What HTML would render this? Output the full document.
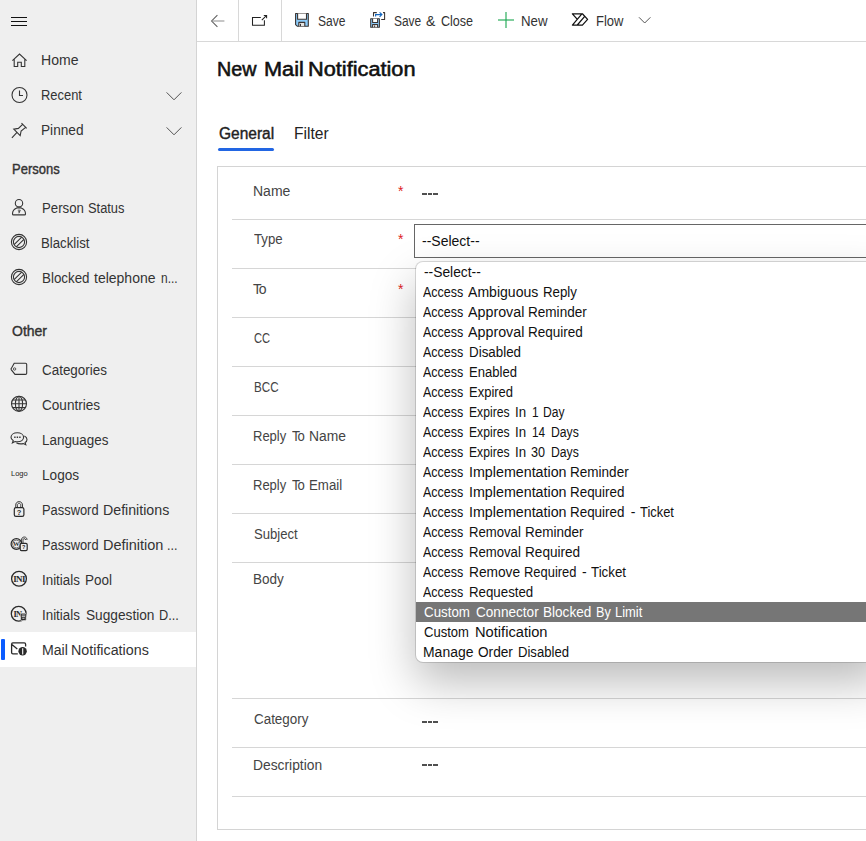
<!DOCTYPE html>
<html>
<head>
<meta charset="utf-8">
<title>New Mail Notification</title>
<style>
*{box-sizing:border-box;margin:0;padding:0}
html,body{width:866px;height:841px;overflow:hidden;background:#fff}
body{font-family:"Liberation Sans",sans-serif;font-size:14px;color:#333;position:relative}
.abs{position:absolute}
#side{position:absolute;left:0;top:0;width:196px;height:841px;background:#efefef}
#sideborder{position:absolute;left:196px;top:0;width:1px;height:841px;background:#d4d4d4}
.nav{position:absolute;left:0;width:196px;height:35px}
.nav .t{position:absolute;left:42px;top:0;line-height:35px;font-size:14px;color:#333;white-space:nowrap}
.nav svg{position:absolute;left:0;top:0;width:40px;height:35px;overflow:visible;fill:none;stroke:#343434;stroke-width:1.1}
.nav.sel{background:#fff}
.nav.sel .t{top:1px}
.nav.sel:before{content:"";position:absolute;left:1px;top:7px;width:4px;height:21px;background:#0b5cff;border-radius:1px}
.grp{position:absolute;left:11px;font-size:14px;font-weight:normal;-webkit-text-stroke:.4px #333;color:#333;line-height:20px}
.chev{position:absolute;left:166px;top:13px;width:16px;height:9px}
#bar{position:absolute;left:197px;top:0;width:669px;height:42px;background:#fff;border-bottom:1px solid #d8d8d8}
.vsep{position:absolute;top:0;width:1px;height:41px;background:#d8d8d8}
.cmd{position:absolute;top:1px;line-height:41px;font-size:14px;color:#333;white-space:nowrap}
#title{position:absolute;left:217px;top:55px;font-size:20px;font-weight:normal;-webkit-text-stroke:.55px #111;color:#111;line-height:28px;white-space:nowrap}
.tab{position:absolute;top:123px;font-size:16px;line-height:22px;color:#222;white-space:nowrap}
#tabline{position:absolute;left:218px;top:148px;width:56px;height:3px;border-radius:2px;background:#2266e3}
#sect{position:absolute;left:217px;top:166px;width:700px;height:664px;border:1px solid #d4d4d4;background:#fff}
.sep{position:absolute;left:232px;width:640px;height:1px;background:#d6d6d6}
.lbl{position:absolute;left:253px;font-size:14px;line-height:20px;color:#444;white-space:nowrap}
.req{position:absolute;left:398px;margin-top:-1px;font-size:14px;line-height:20px;color:#d22}
#sel{position:absolute;left:414px;top:224px;width:470px;height:34px;border:1px solid #666;background:#fff}
#sel span{position:absolute;left:7px;top:6px;line-height:20px;font-size:14px;color:#111}
#dd{position:absolute;left:416px;top:262px;width:470px;height:400px;background:#fff;border-radius:7px;box-shadow:0 0 0 1px rgba(0,0,0,.14),0 20px 46px rgba(0,0,0,.27);overflow:hidden}
#dd div{height:20px;line-height:20px;padding-left:7px;position:relative;font-size:14px;color:#111;white-space:nowrap}
#dd div.hi{background:#767676;color:#fff}
#dd div span{position:absolute;top:0;display:block}
[id^=x]{transform-origin:0 50%}
#title span,.t span,.lbl span,.cmd span{position:absolute;top:0;display:block}
#x9,#x12b,#x13b{letter-spacing:-1.2px}
</style>
<style id="cal">
#x1{transform:scaleX(0.8594);margin-left:1.00px}
#x3{transform:scaleX(0.9464);margin-left:0.00px}
#x4{transform:scaleX(0.9310);margin-left:0.00px}
#x5{transform:scaleX(0.9684);margin-left:0.70px}
#x6{transform:scaleX(0.9743);margin-left:-1.30px}
#x7{transform:scaleX(1.0000);margin-left:0.00px}
#x8{transform:scaleX(0.9433);margin-left:0.60px}
#x9{transform:scaleX(1.0000);margin-left:0.00px}
#x10{transform:scaleX(0.7955);margin-left:0.60px}
#x11{transform:scaleX(0.8297);margin-left:1.10px}
#x14{transform:scaleX(0.9363);margin-left:0.90px}
#x15{transform:scaleX(0.9645);margin-left:0.00px}
#x16{transform:scaleX(0.9581);margin-left:0.60px}
#x17{transform:scaleX(0.9870);margin-left:0.00px}
#xsel{transform:scaleX(1.0000);margin-left:0.00px}
#x18{transform:scaleX(0.9279);margin-left:0.60px}
#x19{transform:scaleX(1.0002);margin-left:0.60px}
#x20{transform:scaleX(1.0028);margin-left:-1.00px}
#x21{transform:scaleX(0.9227);margin-left:-1.00px}
#x22{transform:scaleX(0.9762);margin-left:-1.00px}
#x24{transform:scaleX(0.9431);margin-left:-1.00px}
#x26{transform:scaleX(0.9588);margin-left:0.00px}
#x27{transform:scaleX(0.9700);margin-left:0.00px}
#x28{transform:scaleX(0.9588);margin-left:0.00px}
#x29{transform:scaleX(0.9730);margin-left:0.00px}
#x23a{transform:scaleX(0.9442);margin-left:-0.40px}
#x23b{transform:scaleX(0.9185);margin-left:0.80px}
#x25a{transform:scaleX(0.9543);margin-left:-0.40px}
#x25b{transform:scaleX(1.0000);margin-left:0.00px}
#x25c{transform:scaleX(0.8526);margin-left:1.00px}
#x30a{transform:scaleX(0.9200);margin-left:0.00px}
#x30b{transform:scaleX(1.0132);margin-left:-0.80px}
#x31a{transform:scaleX(0.9200);margin-left:0.00px}
#x31b{transform:scaleX(1.0347);margin-left:-0.80px}
#x31c{transform:scaleX(0.8900);margin-left:-1.20px}
#x32a{transform:scaleX(0.9539);margin-left:0.00px}
#x32b{transform:scaleX(0.9630);margin-left:-1.40px}
#x33a{transform:scaleX(0.9539);margin-left:0.00px}
#x33b{transform:scaleX(0.9771);margin-left:0.00px}
#x33c{transform:scaleX(0.9100);margin-left:0.00px}
#x34a{transform:scaleX(1.0084);margin-left:0.00px}
#x34b{transform:scaleX(1.0201);margin-left:-1.00px}
#x2a{transform:scaleX(0.8531);margin-left:0.60px}
#x2b{transform:scaleX(1.0000);margin-left:0.00px}
#x2c{transform:scaleX(0.8970);margin-left:0.80px}
#x12a{transform:scaleX(0.9283);margin-left:-1.30px}
#x12b{transform:scaleX(0.9385);margin-left:0.80px}
#x12c{transform:scaleX(0.9897);margin-left:0.40px}
#x13a{transform:scaleX(0.9283);margin-left:-1.30px}
#x13b{transform:scaleX(0.9385);margin-left:0.80px}
#x13c{transform:scaleX(0.9471);margin-left:-0.20px}
#x35a{transform:scaleX(0.9862);margin-left:0.00px}
#x36a{transform:scaleX(0.8913);margin-left:-1.00px}
#x36b{transform:scaleX(1.0041);margin-left:-0.70px}
#x36c{transform:scaleX(0.9486);margin-left:0.00px}
#x37a{transform:scaleX(0.8913);margin-left:-1.00px}
#x37b{transform:scaleX(1.0197);margin-left:-0.70px}
#x37c{transform:scaleX(0.9683);margin-left:0.00px}
#x38a{transform:scaleX(0.8913);margin-left:-1.00px}
#x38b{transform:scaleX(1.0197);margin-left:-0.70px}
#x38c{transform:scaleX(0.9655);margin-left:0.00px}
#x39a{transform:scaleX(0.8913);margin-left:-1.00px}
#x39b{transform:scaleX(0.9554);margin-left:0.00px}
#x40a{transform:scaleX(0.8913);margin-left:-1.00px}
#x40b{transform:scaleX(0.9322);margin-left:0.00px}
#x41a{transform:scaleX(0.8913);margin-left:-1.00px}
#x41b{transform:scaleX(0.9279);margin-left:0.00px}
#x42a{transform:scaleX(0.8913);margin-left:-1.00px}
#x42b{transform:scaleX(0.8698);margin-left:-0.10px}
#x42c{transform:scaleX(0.9497);margin-left:-1.30px}
#x42d{transform:scaleX(0.8500);margin-left:-0.50px}
#x42e{transform:scaleX(0.8656);margin-left:0.00px}
#x43a{transform:scaleX(0.8913);margin-left:-1.00px}
#x43b{transform:scaleX(0.8698);margin-left:-0.10px}
#x43c{transform:scaleX(0.9497);margin-left:-1.30px}
#x43d{transform:scaleX(0.8421);margin-left:-0.40px}
#x43e{transform:scaleX(0.8721);margin-left:-0.40px}
#x44a{transform:scaleX(0.8913);margin-left:-1.00px}
#x44b{transform:scaleX(0.8698);margin-left:-0.10px}
#x44c{transform:scaleX(0.9497);margin-left:-1.30px}
#x44d{transform:scaleX(0.9000);margin-left:0.00px}
#x44e{transform:scaleX(0.8721);margin-left:-0.40px}
#x45a{transform:scaleX(0.8913);margin-left:-1.00px}
#x45b{transform:scaleX(1.0192);margin-left:0.00px}
#x45c{transform:scaleX(0.9667);margin-left:-1.20px}
#x46a{transform:scaleX(0.8913);margin-left:-1.00px}
#x46b{transform:scaleX(1.0192);margin-left:0.00px}
#x46c{transform:scaleX(0.9586);margin-left:-1.20px}
#x47a{transform:scaleX(0.8913);margin-left:-1.00px}
#x47b{transform:scaleX(1.0192);margin-left:0.00px}
#x47c{transform:scaleX(0.9586);margin-left:-1.20px}
#x47d{transform:scaleX(1.0000);margin-left:0.80px}
#x47e{transform:scaleX(0.9216);margin-left:0.00px}
#x48a{transform:scaleX(0.8913);margin-left:-1.00px}
#x48b{transform:scaleX(0.9385);margin-left:0.00px}
#x48c{transform:scaleX(0.9650);margin-left:0.00px}
#x49a{transform:scaleX(0.8913);margin-left:-1.00px}
#x49b{transform:scaleX(0.9385);margin-left:0.00px}
#x49c{transform:scaleX(0.9709);margin-left:0.00px}
#x50a{transform:scaleX(0.8913);margin-left:-1.00px}
#x50b{transform:scaleX(0.9800);margin-left:0.00px}
#x50c{transform:scaleX(0.9231);margin-left:0.80px}
#x50d{transform:scaleX(1.0000);margin-left:0.00px}
#x50e{transform:scaleX(0.9514);margin-left:0.00px}
#x51a{transform:scaleX(0.8913);margin-left:-1.00px}
#x51b{transform:scaleX(0.9489);margin-left:0.00px}
#x52a{transform:scaleX(0.9521);margin-left:0.00px}
#x52b{transform:scaleX(0.9708);margin-left:0.60px}
#x52c{transform:scaleX(0.9694);margin-left:0.00px}
#x52d{transform:scaleX(0.9062);margin-left:0.00px}
#x52e{transform:scaleX(0.9245);margin-left:-1.30px}
#x53a{transform:scaleX(0.9314);margin-left:0.00px}
#x53b{transform:scaleX(1.0471);margin-left:-0.20px}
#x54a{transform:scaleX(0.9963);margin-left:-1.50px}
#x54b{transform:scaleX(0.9750);margin-left:0.00px}
#x54c{transform:scaleX(0.9360);margin-left:-1.10px}
#xta{transform:scaleX(0.9877);margin-left:-1.00px}
#xtb{transform:scaleX(1.0857);margin-left:0.00px}
#xtc{transform:scaleX(1.0866);margin-left:-0.90px}
</style>
</head>
<body>
<div id="side"></div>
<div id="sideborder"></div>

<!-- main -->
<div id="bar"></div>
<div class="vsep" style="left:238px"></div>
<div class="vsep" style="left:281px"></div>
<div class="cmd" id="x1" style="left:317px">Save</div>
<div class="cmd" style="left:392px"><span id="x2a" style="left:1px">Save</span><span id="x2b" style="left:34px">&amp;</span><span id="x2c" style="left:48px">Close</span></div>
<div class="cmd" id="x3" style="left:521px">New</div>
<div class="cmd" id="x4" style="left:596px">Flow</div>

<svg class="abs" style="left:197px;top:0;width:669px;height:41px" viewBox="197 0 669 41" fill="none" stroke-width="1">
<!-- back -->
<rect x="213" y="20" width="11.4" height="2" fill="#c6c6c6" stroke="none"/><path d="M217.4 15.2 L211.6 21 L217.4 26.8" stroke="#5c5c5c" stroke-width="1.05"/>
<!-- popout -->
<path d="M260.8 17.5 H252.5 V25.2 H264.4 V20.3" stroke="#222" stroke-width="1.05"/><path d="M261.8 20.2 L266.4 15.6 M263.8 15.4 H266.6 V18.2" stroke="#222" stroke-width="1.05"/>
<!-- save -->
<g stroke="#3a3432" stroke-width="1.1" stroke-linejoin="round">
<path d="M295.6 13.5 H308.3 V26.2 H297.2 L295.6 24.6 Z" fill="#8ccbf9"/>
<path d="M297.6 13.5 V19.3 H306.5 V13.5" fill="#fff"/>
<path d="M298.8 26.2 V22.4 H304.8 V26.2" fill="#e4e4e4"/>
<rect x="300" y="23.8" width="1" height="2.4" fill="#3a3432" stroke="none"/>
</g>
<!-- save & close -->
<g stroke="#3a3432" stroke-width="1.05" stroke-linejoin="round">
<rect x="370.7" y="18.7" width="8.7" height="8.5" fill="#8ccbf9"/>
<path d="M372.6 18.7 V22.5 H377.6 V18.7" fill="#fff"/>
<path d="M372.6 27.2 V24.4 H377.6 V27.2" fill="#e4e4e4"/>
<rect x="374.2" y="25.4" width=".9" height="1.8" fill="#3a3432" stroke="none"/>
<path d="M376.8 12.6 H373.5 V16.6" fill="none"/><path d="M383 12.6 H384.6 V19.4 H381.2" fill="none"/>
</g>
<path d="M375.6 16.6 V14.6 H381.8 M379.6 12.4 L381.9 14.6 L379.6 16.8" stroke="#1166c0" stroke-width="1.1" fill="none"/>
<!-- new -->
<rect x="498" y="19" width="16" height="2" fill="#80ce9d" stroke="none"/><rect x="505" y="12" width="2" height="16" fill="#80ce9d" stroke="none"/><rect x="505" y="19" width="2" height="2" fill="#48b778" stroke="none"/>
<!-- flow -->
<path d="M576.9 18.9 L572.4 13.8 H582.4 L587.6 19.4 L582.4 25.1 H572.4 L581.9 13.9 M577.3 25 L584.5 16.6" stroke="#111" stroke-width="1.25" stroke-linejoin="round" stroke-linecap="round"/>
<!-- chevron -->
<path d="M639 17.3 L644.7 23 L650.4 17.3" stroke="#555"/>
</svg>
<div id="title"><span id="xta" style="left:1px">New</span><span id="xtb" style="left:47px">Mail</span><span id="xtc" style="left:92px">Notification</span></div>
<div class="tab" id="x5" style="left:218px;-webkit-text-stroke:.4px #222">General</div>
<div class="tab" id="x6" style="left:295px">Filter</div>
<div id="tabline"></div>

<div id="sect"></div>
<div class="sep" style="top:219px"></div>
<div class="sep" style="top:268px"></div>
<div class="sep" style="top:317px"></div>
<div class="sep" style="top:366px"></div>
<div class="sep" style="top:415px"></div>
<div class="sep" style="top:464px"></div>
<div class="sep" style="top:513px"></div>
<div class="sep" style="top:562px"></div>
<div class="sep" style="top:698px"></div>
<div class="sep" style="top:747px"></div>
<div class="sep" style="top:796px"></div>

<div class="lbl" id="x7" style="top:181px">Name</div>
<div class="lbl" id="x8" style="top:229px">Type</div>
<div class="lbl" id="x9" style="top:279px">To</div>
<div class="lbl" id="x10" style="top:328px">CC</div>
<div class="lbl" id="x11" style="top:377px">BCC</div>
<div class="lbl" style="top:426px"><span id="x12a" style="left:1px">Reply</span><span id="x12b" style="left:38px">To</span><span id="x12c" style="left:56px">Name</span></div>
<div class="lbl" style="top:475px"><span id="x13a" style="left:1px">Reply</span><span id="x13b" style="left:38px">To</span><span id="x13c" style="left:56px">Email</span></div>
<div class="lbl" id="x14" style="top:524px">Subject</div>
<div class="lbl" id="x15" style="top:569px">Body</div>
<div class="lbl" id="x16" style="top:709px">Category</div>
<div class="lbl" id="x17" style="top:755px">Description</div>

<div class="req" style="top:182px">*</div>
<div class="req" style="top:230px">*</div>
<div class="req" style="top:280px">*</div>

<div class="abs" style="left:422px;top:193px;width:4.6px;height:2px;background:#505050"></div><div class="abs" style="left:427.5px;top:193px;width:4.6px;height:2px;background:#505050"></div><div class="abs" style="left:433px;top:193px;width:4.6px;height:2px;background:#505050"></div>
<div class="abs" style="left:422px;top:721px;width:4.6px;height:2px;background:#505050"></div><div class="abs" style="left:427.5px;top:721px;width:4.6px;height:2px;background:#505050"></div><div class="abs" style="left:433px;top:721px;width:4.6px;height:2px;background:#505050"></div>
<div class="abs" style="left:422px;top:764px;width:4.6px;height:2px;background:#505050"></div><div class="abs" style="left:427.5px;top:764px;width:4.6px;height:2px;background:#505050"></div><div class="abs" style="left:433px;top:764px;width:4.6px;height:2px;background:#505050"></div>

<div id="sel"><span id="xsel">--Select--</span></div>
<div id="dd">
<div><span id="x35a" style="left:8px">--Select--</span></div>
<div><span id="x36a" style="left:8px">Access</span><span id="x36b" style="left:53px">Ambiguous</span><span id="x36c" style="left:127px">Reply</span></div>
<div><span id="x37a" style="left:8px">Access</span><span id="x37b" style="left:53px">Approval</span><span id="x37c" style="left:112px">Reminder</span></div>
<div><span id="x38a" style="left:8px">Access</span><span id="x38b" style="left:53px">Approval</span><span id="x38c" style="left:112px">Required</span></div>
<div><span id="x39a" style="left:8px">Access</span><span id="x39b" style="left:53px">Disabled</span></div>
<div><span id="x40a" style="left:8px">Access</span><span id="x40b" style="left:53px">Enabled</span></div>
<div><span id="x41a" style="left:8px">Access</span><span id="x41b" style="left:53px">Expired</span></div>
<div><span id="x42a" style="left:8px">Access</span><span id="x42b" style="left:53px">Expires</span><span id="x42c" style="left:100px">In</span><span id="x42d" style="left:116px">1</span><span id="x42e" style="left:127px">Day</span></div>
<div><span id="x43a" style="left:8px">Access</span><span id="x43b" style="left:53px">Expires</span><span id="x43c" style="left:100px">In</span><span id="x43d" style="left:116px">14</span><span id="x43e" style="left:135px">Days</span></div>
<div><span id="x44a" style="left:8px">Access</span><span id="x44b" style="left:53px">Expires</span><span id="x44c" style="left:100px">In</span><span id="x44d" style="left:115px">30</span><span id="x44e" style="left:135px">Days</span></div>
<div><span id="x45a" style="left:8px">Access</span><span id="x45b" style="left:53px">Implementation</span><span id="x45c" style="left:155px">Reminder</span></div>
<div><span id="x46a" style="left:8px">Access</span><span id="x46b" style="left:53px">Implementation</span><span id="x46c" style="left:155px">Required</span></div>
<div><span id="x47a" style="left:8px">Access</span><span id="x47b" style="left:53px">Implementation</span><span id="x47c" style="left:155px">Required</span><span id="x47d" style="left:214px">-</span><span id="x47e" style="left:224px">Ticket</span></div>
<div><span id="x48a" style="left:8px">Access</span><span id="x48b" style="left:53px">Removal</span><span id="x48c" style="left:109px">Reminder</span></div>
<div><span id="x49a" style="left:8px">Access</span><span id="x49b" style="left:53px">Removal</span><span id="x49c" style="left:109px">Required</span></div>
<div><span id="x50a" style="left:8px">Access</span><span id="x50b" style="left:53px">Remove</span><span id="x50c" style="left:107px">Required</span><span id="x50d" style="left:166px">-</span><span id="x50e" style="left:175px">Ticket</span></div>
<div><span id="x51a" style="left:8px">Access</span><span id="x51b" style="left:53px">Requested</span></div>
<div class="hi"><span id="x52a" style="left:8px">Custom</span><span id="x52b" style="left:59px">Connector</span><span id="x52c" style="left:127px">Blocked</span><span id="x52d" style="left:180px">By</span><span id="x52e" style="left:200px">Limit</span></div>
<div><span id="x53a" style="left:8px">Custom</span><span id="x53b" style="left:59px">Notification</span></div>
<div><span id="x54a" style="left:8px">Manage</span><span id="x54b" style="left:62px">Order</span><span id="x54c" style="left:103px">Disabled</span></div>
</div>

<!-- sidebar items -->
<div class="abs" style="left:11px;top:17px;width:16px;height:1px;background:#111"></div><div class="abs" style="left:11px;top:21px;width:16px;height:1px;background:#111"></div><div class="abs" style="left:11px;top:25px;width:16px;height:1px;background:#111"></div>
<div class="grp" id="x18" style="top:159px">Persons</div>
<div class="grp" id="x19" style="top:321px">Other</div>

<div class="nav" style="top:43px"><svg viewBox="0 0 40 35"><path d="M12.4 17.6 L19.5 11 L26.6 17.6 M14.2 16.2 V23.5 H17.7 V19.3 H21.3 V23.5 H24.8 V16.2"/></svg><div class="t" id="x20">Home</div></div>
<div class="nav" style="top:78px"><svg viewBox="0 0 40 35"><circle cx="19.5" cy="17" r="7.5"/><path d="M19.5 12.5 V17.5 H23"/></svg><div class="t" id="x21">Recent</div><svg class="chev" viewBox="0 0 16 9" style="left:166px;top:14px;width:16px;height:9px;stroke:#4a4a4a;stroke-width:.95"><path d="M0.6 0.4 L8 7.8 L15.4 0.4"/></svg></div>
<div class="nav" style="top:113px"><svg viewBox="0 0 40 35"><path d="M21.5 10.2 L26.7 15.4 M22.6 11.3 L18.4 15.4 L13.8 16.2 L20.2 22.6 L21.1 18 L25.6 14.3 M17 19.4 L11.9 24.9"/></svg><div class="t" id="x22">Pinned</div><svg class="chev" viewBox="0 0 16 9" style="left:166px;top:14px;width:16px;height:9px;stroke:#4a4a4a;stroke-width:.95"><path d="M0.6 0.4 L8 7.8 L15.4 0.4"/></svg></div>
<div class="nav" style="top:191px"><svg viewBox="0 0 40 35"><path d="M12.5 22.9 C12.5 19.6 14.6 17.7 16.8 16.9 H21.2 C23.4 17.7 25.5 19.6 25.5 22.9 Q25.5 23.9 24.5 23.9 H13.5 Q12.5 23.9 12.5 22.9 Z"/><circle cx="19" cy="12.2" r="3.7" fill="#efefef"/><path d="M17.8 19.2 H20.3 L18.9 22.3 M18 20.8 H20" stroke-width=".8"/></svg><div class="t"><span id="x23a" style="left:0px">Person</span><span id="x23b" style="left:45px">Status</span></div></div>
<div class="nav" style="top:226px"><svg viewBox="0 0 40 35"><circle cx="19" cy="16" r="7.6"/><circle cx="19" cy="16" r="5.6"/><path d="M14.1 18.7 L21.7 11.1 M16.3 20.9 L23.9 13.3"/></svg><div class="t" id="x24">Blacklist</div></div>
<div class="nav" style="top:261px"><svg viewBox="0 0 40 35"><circle cx="19" cy="16" r="7.6"/><circle cx="19" cy="16" r="5.6"/><path d="M14.1 18.7 L21.7 11.1 M16.3 20.9 L23.9 13.3"/></svg><div class="t"><span id="x25a" style="left:0px">Blocked</span><span id="x25b" style="left:52px">telephone</span><span id="x25c" style="left:118px">n...</span></div></div>
<div class="nav" style="top:353px"><svg viewBox="0 0 40 35"><path d="M14.2 10.2 H25.5 Q26.7 10.2 26.7 11.4 V20.2 Q26.7 21.4 25.5 21.4 H15 L11.2 16.6 Q10.9 16 11.3 15.4 Z"/><circle cx="14.6" cy="16" r="1.2" stroke-width=".8"/></svg><div class="t" id="x26">Categories</div></div>
<div class="nav" style="top:388px"><svg viewBox="0 0 40 35"><circle cx="19" cy="15.8" r="7.5"/><ellipse cx="19" cy="15.8" rx="3.6" ry="7.5"/><path d="M19 8.3 V23.3 M11.5 15.8 H26.5 M12.6 12 H25.4 M12.6 19.6 H25.4"/></svg><div class="t" id="x27">Countries</div></div>
<div class="nav" style="top:423px"><svg viewBox="0 0 40 35"><path d="M17.3 9.8 C21 9.8 23.6 11.7 23.6 14.3 C23.6 16.9 21 18.8 17.3 18.8 C16.5 18.8 15.8 18.7 15.1 18.5 L12.4 19.8 L13.2 17.6 C11.8 16.8 11 15.6 11 14.3 C11 11.7 13.6 9.8 17.3 9.8 Z"/><path d="M24.4 13 C26 13.8 27 15 27 16.5 C27 17.8 26.3 18.9 25.1 19.6 L25.8 21.8 L23.2 20.6 C22.4 20.8 21.6 20.9 20.8 20.9 C19 20.9 17.5 20.5 16.4 19.7"/><path d="M14.2 14.3 h1.4 M16.7 14.3 h1.4 M19.2 14.3 h1.4" stroke-width="1.4"/></svg><div class="t" id="x28">Languages</div></div>
<div class="nav" style="top:458px"><div style="position:absolute;left:11px;top:11px;font-size:7.5px;line-height:10px;font-weight:normal;color:#222;letter-spacing:0">Logo</div><div class="t" id="x29">Logos</div></div>
<div class="nav" style="top:493px"><svg viewBox="0 0 40 35"><g stroke="#2a2a2a" stroke-width="1.2"><rect x="14.3" y="14.6" width="9.6" height="8.8" rx="1.7"/><path d="M15.8 14.6 V12 C15.8 9.9 17.1 8.7 19.1 8.7 C21.1 8.7 22.4 9.9 22.4 12 V14.6" stroke-width="1"/><path d="M17.5 14.6 V12.2 C17.5 11 18.1 10.4 19.1 10.4 C20.1 10.4 20.7 11 20.7 12.2 V14.6" stroke-width=".8"/></g><text x="19.1" y="22" font-size="7.5" font-weight="bold" text-anchor="middle" fill="#2a2a2a" stroke="none" font-family="Liberation Sans">?</text></svg><div class="t"><span id="x30a" style="left:0px">Password</span><span id="x30b" style="left:62px">Definitions</span></div></div>
<div class="nav" style="top:528px"><svg viewBox="0 0 40 35"><g stroke="#2a2a2a" stroke-width="1.2"><circle cx="16.4" cy="16" r="5.3"/><circle cx="16.4" cy="16" r="3.9" stroke-width=".6"/></g><text x="16.3" y="18.3" font-size="6.5" font-weight="bold" text-anchor="middle" fill="#2a2a2a" stroke="none" font-family="Liberation Serif">W</text><rect x="20.2" y="15.4" width="7" height="7.2" rx="1.3" fill="#efefef" stroke="#2a2a2a" stroke-width="1.2"/><path d="M21.5 15.4 V12.2 C21.5 10.2 22.6 9 24.3 9 C26 9 27 10.2 27 12 M23 15.4 V12.4 C23 11.2 23.5 10.6 24.3 10.6 C25.1 10.6 25.6 11.2 25.6 12" stroke="#2a2a2a" stroke-width=".9"/><text x="23.7" y="21.3" font-size="5.5" font-weight="bold" text-anchor="middle" fill="#2a2a2a" stroke="none" font-family="Liberation Sans">?</text></svg><div class="t"><span id="x31a" style="left:0px">Password</span><span id="x31b" style="left:62px">Definition</span><span id="x31c" style="left:126px">...</span></div></div>
<div class="nav" style="top:563px"><svg viewBox="0 0 40 35"><circle cx="19" cy="15.7" r="7.4" stroke="#2a2a2a" stroke-width="1.3"/><text x="19" y="19" font-size="9" font-weight="bold" text-anchor="middle" fill="#2a2a2a" stroke="none" font-family="Liberation Serif" letter-spacing="-0.7">INI</text></svg><div class="t"><span id="x32a" style="left:0px">Initials</span><span id="x32b" style="left:44px">Pool</span></div></div>
<div class="nav" style="top:598px"><svg viewBox="0 0 40 35"><circle cx="18.7" cy="15.7" r="7.4" stroke="#2a2a2a" stroke-width="1.3"/><text x="17.4" y="18.6" font-size="8.5" font-weight="bold" text-anchor="middle" fill="#2a2a2a" stroke="none" font-family="Liberation Serif" letter-spacing="-0.7">IN</text><rect x="20.6" y="15.2" width="5.6" height="7.4" rx="1.2" fill="#2a2a2a" stroke="#efefef" stroke-width=".6"/><path d="M21.8 17 h3.2 M21.8 18.6 h3.2 M22.3 20.3 h2.2" stroke="#efefef" stroke-width=".8"/></svg><div class="t"><span id="x33a" style="left:0px">Initials</span><span id="x33b" style="left:44px">Suggestion</span><span id="x33c" style="left:117px">D...</span></div></div>
<div class="nav sel" style="top:632px"><svg viewBox="0 0 40 35"><g stroke="#2a2a2a" stroke-width="1.3"><path d="M25.6 14.4 V12.2 Q25.6 10.9 24.3 10.9 H12.9 Q11.6 10.9 11.6 12.2 V20.6 Q11.6 21.9 12.9 21.9 H17.8 M11.9 12.6 L17.3 16.9"/></g><circle cx="22.6" cy="19.3" r="4.2" fill="#2a2a2a" stroke="none"/><path d="M22.7 16.3 V22.5" stroke="#fff" stroke-width="1.1"/></svg><div class="t"><span id="x34a" style="left:0px">Mail</span><span id="x34b" style="left:30px">Notifications</span></div></div>
</body>
</html>
